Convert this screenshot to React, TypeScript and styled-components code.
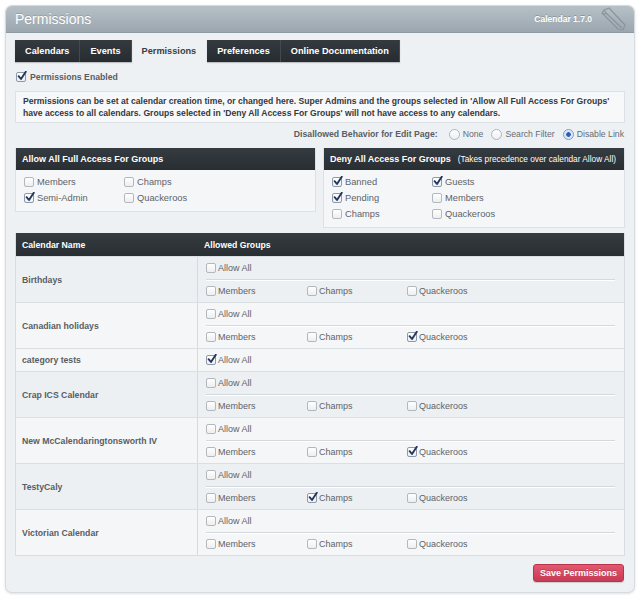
import React from 'react'
import styled, { createGlobalStyle } from 'styled-components'

const GlobalStyle = createGlobalStyle`
  body {
    margin: 0;
    background: #ffffff;
    font-family: 'Liberation Sans', Arial, Helvetica, sans-serif;
  }
`

type Calendar = {
  name: string
  allowAll: boolean
  groups?: { members: boolean; champs: boolean; quackeroos: boolean }
  shade: 'dark' | 'light'
}

const calendars: Calendar[] = [
  { name: 'Birthdays', allowAll: false, groups: { members: false, champs: false, quackeroos: false }, shade: 'dark' },
  { name: 'Canadian holidays', allowAll: false, groups: { members: false, champs: false, quackeroos: true }, shade: 'light' },
  { name: 'category tests', allowAll: true, shade: 'light' },
  { name: 'Crap ICS Calendar', allowAll: false, groups: { members: false, champs: false, quackeroos: false }, shade: 'dark' },
  { name: 'New McCalendaringtonsworth IV', allowAll: false, groups: { members: false, champs: false, quackeroos: true }, shade: 'light' },
  { name: 'TestyCaly', allowAll: false, groups: { members: false, champs: true, quackeroos: false }, shade: 'dark' },
  { name: 'Victorian Calendar', allowAll: false, groups: { members: false, champs: false, quackeroos: false }, shade: 'light' },
]

const tabs = ['Calendars', 'Events', 'Permissions', 'Preferences', 'Online Documentation']

const CheckBox = ({ checked }: { checked?: boolean }) => (
  <Box $checked={checked}>
    {checked && (
      <svg width='10' height='10' viewBox='0 0 10 10'>
        <path d='M1.6 5.2 L4 8 L8.8 0.8' fill='none' stroke='#23365e' strokeWidth='1.9' strokeLinecap='round' strokeLinejoin='round' />
      </svg>
    )}
  </Box>
)

const Check = ({ checked, label }: { checked?: boolean; label: string }) => (
  <CheckLabel>
    <CheckBox checked={checked} />
    {label}
  </CheckLabel>
)

const App = (): JSX.Element => {
  return (
    <>
      <GlobalStyle />
      <Page>
        <Panel>
          <Header>
            <Title>Permissions</Title>
            <HeaderRight>
              <Version>Calendar 1.7.0</Version>
              <svg width='28' height='26' viewBox='0 0 28 26'>
                <g fill='none' stroke='#8a959d' strokeWidth='1.2' strokeLinejoin='round'>
                  <path d='M4 4 L9 2 L25 19 L23 24 L18 23 L2 7 Z' />
                  <path d='M4 4 L7 8 L2 7' />
                  <path d='M7 8 L22 22' />
                </g>
              </svg>
            </HeaderRight>
          </Header>
          <Body>
            <Tabs>
              {tabs.map((t) => (
                <Tab key={t} $active={t === 'Permissions'}>
                  {t}
                </Tab>
              ))}
            </Tabs>

            <EnabledRow>
              <CheckBox checked />
              Permissions Enabled
            </EnabledRow>

            <Notice>
              Permissions can be set at calendar creation time, or changed here. Super Admins and the groups selected in
              'Allow All Full Access For Groups' have access to all calendars. Groups selected in 'Deny All Access For
              Groups' will not have access to any calendars.
            </Notice>

            <BehaviorRow>
              <BehaviorLabel>Disallowed Behavior for Edit Page:</BehaviorLabel>
              <RadioLabel>
                <Radio />
                None
              </RadioLabel>
              <RadioLabel>
                <Radio />
                Search Filter
              </RadioLabel>
              <RadioLabel>
                <Radio $selected />
                Disable Link
              </RadioLabel>
            </BehaviorRow>

            <GroupPanels>
              <GroupPanel $width={301}>
                <DarkHead>Allow All Full Access For Groups</DarkHead>
                <GroupGrid>
                  <Check label='Members' />
                  <Check label='Champs' />
                  <Check label='Semi-Admin' checked />
                  <Check label='Quackeroos' />
                </GroupGrid>
              </GroupPanel>
              <GroupPanel $width={302}>
                <DarkHead>
                  Deny All Access For Groups
                  <HeadNote>(Takes precedence over calendar Allow All)</HeadNote>
                </DarkHead>
                <GroupGrid>
                  <Check label='Banned' checked />
                  <Check label='Guests' checked />
                  <Check label='Pending' checked />
                  <Check label='Members' />
                  <Check label='Champs' />
                  <Check label='Quackeroos' />
                </GroupGrid>
              </GroupPanel>
            </GroupPanels>

            <CalTable>
              <TableHead>
                <span>Calendar Name</span>
                <span>Allowed Groups</span>
              </TableHead>
              {calendars.map((c) => (
                <CalRow key={c.name} $shade={c.shade}>
                  <NameCell>{c.name}</NameCell>
                  <GroupsCell>
                    <AllowLine $last={!c.groups}>
                      <Check label='Allow All' checked={c.allowAll} />
                    </AllowLine>
                    {c.groups && (
                      <GroupsLine>
                        <Check label='Members' checked={c.groups.members} />
                        <Check label='Champs' checked={c.groups.champs} />
                        <Check label='Quackeroos' checked={c.groups.quackeroos} />
                      </GroupsLine>
                    )}
                  </GroupsCell>
                </CalRow>
              ))}
            </CalTable>

            <Footer>
              <SaveButton>Save Permissions</SaveButton>
            </Footer>
          </Body>
        </Panel>
      </Page>
    </>
  )
}

export default App

const Page = styled.div`
  padding: 5px 5px 3px 5px;
`

const Panel = styled.div`
  background: #eef1f4;
  border: 1px solid #d6dbe0;
  border-radius: 7px;
  box-shadow: 0 1px 3px rgba(0, 0, 0, 0.12);
  overflow: hidden;
`

const Header = styled.div`
  height: 26px;
  display: flex;
  align-items: center;
  justify-content: space-between;
  padding: 0 6px 0 9px;
  background: linear-gradient(#b6c0c7, #9ba6ae);
  border-bottom: 1px solid #8e99a1;
`

const Title = styled.div`
  color: #ffffff;
  font-size: 14px;
  text-shadow: 0 -1px 0 rgba(0, 0, 0, 0.15);
`

const HeaderRight = styled.div`
  display: flex;
  align-items: center;
  gap: 8px;
`

const Version = styled.div`
  color: #ffffff;
  font-size: 8.5px;
  font-weight: bold;
  text-shadow: 0 -1px 0 rgba(0, 0, 0, 0.2);
`

const Body = styled.div`
  padding: 7px 9px 10px 9px;
`

const Tabs = styled.div`
  display: flex;
  height: 22px;
`

const Tab = styled.div<{ $active?: boolean }>`
  display: flex;
  align-items: center;
  padding: 0 10px;
  font-size: 9.2px;
  font-weight: bold;
  color: ${(p) => (p.$active ? '#3a3f43' : '#ffffff')};
  background: ${(p) => (p.$active ? 'transparent' : 'linear-gradient(#343b40, #262c30)')};
  border-right: 1px solid ${(p) => (p.$active ? 'transparent' : '#454d53')};
  box-shadow: ${(p) => (p.$active ? 'none' : '0 1px 1px rgba(0,0,0,0.2)')};
`

const Box = styled.span<{ $checked?: boolean }>`
  position: relative;
  display: inline-flex;
  align-items: center;
  justify-content: center;
  width: 8px;
  height: 8px;
  flex: none;
  margin-right: 2px;
  border: 1px solid ${(p) => (p.$checked ? '#8f99a8' : '#b3b8bd')};
  border-radius: 2px;
  background: linear-gradient(#ffffff, #eceef0);
  svg {
    position: absolute;
    left: 0;
    top: -2px;
  }
`

const CheckLabel = styled.label`
  display: flex;
  align-items: center;
  font-size: 9px;
  color: #5d6368;
  white-space: nowrap;
`

const EnabledRow = styled.div`
  display: flex;
  align-items: center;
  margin-top: 9px;
  padding-left: 1px;
  height: 12px;
  font-size: 8.7px;
  font-weight: bold;
  color: #585e63;
  ${Box} {
    margin-right: 4px;
  }
`

const Notice = styled.div`
  margin-top: 8px;
  padding: 3px 7px 3px 7px;
  background: #f7f8f9;
  border: 1px solid #dde1e5;
  font-size: 8.6px;
  font-weight: bold;
  line-height: 12px;
  color: #34393d;
`

const BehaviorRow = styled.div`
  display: flex;
  justify-content: flex-end;
  align-items: center;
  gap: 8px;
  height: 12px;
  margin-top: 5px;
  padding-right: 1px;
`

const BehaviorLabel = styled.span`
  font-size: 8.7px;
  font-weight: bold;
  color: #585e63;
  margin-right: 3px;
`

const RadioLabel = styled.label`
  display: flex;
  align-items: center;
  gap: 3px;
  font-size: 8.7px;
  color: #666c71;
`

const Radio = styled.span<{ $selected?: boolean }>`
  width: 9px;
  height: 9px;
  border-radius: 50%;
  border: 1px solid ${(p) => (p.$selected ? '#7b9ccc' : '#b0b5ba')};
  background: ${(p) =>
    p.$selected
      ? 'radial-gradient(circle, #2c5fb5 0 2px, #dce8f8 2.6px)'
      : 'linear-gradient(#ffffff, #eceef0)'};
`

const GroupPanels = styled.div`
  display: flex;
  align-items: flex-start;
  gap: 7px;
  margin-top: 8px;
`

const GroupPanel = styled.div<{ $width: number }>`
  width: ${(p) => p.$width}px;
  background: #f5f6f8;
  border: 1px solid #dde1e5;
  border-top: none;
`

const DarkHead = styled.div`
  display: flex;
  align-items: center;
  justify-content: space-between;
  height: 22px;
  padding: 0 8px 0 6px;
  background: linear-gradient(#353c41, #282e32);
  color: #ffffff;
  font-size: 9px;
  font-weight: bold;
`

const HeadNote = styled.span`
  font-weight: normal;
  font-size: 8.3px;
`

const GroupGrid = styled.div`
  display: grid;
  grid-template-columns: 100px 100px;
  grid-auto-rows: 16px;
  align-items: center;
  padding: 4px 8px 5px 8px;
  ${CheckLabel} {
    font-size: 9.3px;
  }
  ${Box} {
    margin-right: 3px;
  }
`

const CalTable = styled.div`
  margin-top: 5px;
  border: 1px solid #d9dde2;
  border-top: none;
`

const TableHead = styled.div`
  display: grid;
  grid-template-columns: 182px 1fr;
  align-items: center;
  height: 23px;
  background: linear-gradient(#353c41, #282e32);
  color: #ffffff;
  font-size: 8.7px;
  font-weight: bold;
  span {
    padding-left: 6px;
  }
`

const CalRow = styled.div<{ $shade: 'dark' | 'light' }>`
  display: grid;
  grid-template-columns: 182px 1fr;
  background: ${(p) => (p.$shade === 'dark' ? '#edf0f3' : '#f5f6f8')};
  border-top: 1px solid #dadfe3;
`

const NameCell = styled.div`
  display: flex;
  align-items: center;
  padding-left: 6px;
  font-size: 8.7px;
  font-weight: bold;
  color: #585e63;
  border-right: 1px solid #d6dbe0;
`

const GroupsCell = styled.div`
  padding: 0 9px 0 8px;
`

const AllowLine = styled.div<{ $last?: boolean }>`
  display: flex;
  align-items: center;
  height: 22px;
  border-bottom: ${(p) => (p.$last ? 'none' : '1px solid #d4d9de')};
  box-shadow: ${(p) => (p.$last ? 'none' : '0 1px 0 #ffffff')};
`

const GroupsLine = styled.div`
  display: grid;
  grid-template-columns: 101px 100px 100px;
  align-items: center;
  height: 22px;
`

const Footer = styled.div`
  display: flex;
  justify-content: flex-end;
  margin-top: 8px;
  padding-right: 1px;
`

const SaveButton = styled.button`
  height: 18px;
  padding: 0 6px;
  border: 1px solid #b8344d;
  border-radius: 3px;
  background: linear-gradient(#e3586f, #c93a54);
  color: #ffffff;
  font-family: 'Liberation Sans', Arial, sans-serif;
  font-size: 9px;
  font-weight: bold;
  text-shadow: 0 -1px 0 rgba(0, 0, 0, 0.2);
  box-shadow: 0 1px 1px rgba(0, 0, 0, 0.15);
`
